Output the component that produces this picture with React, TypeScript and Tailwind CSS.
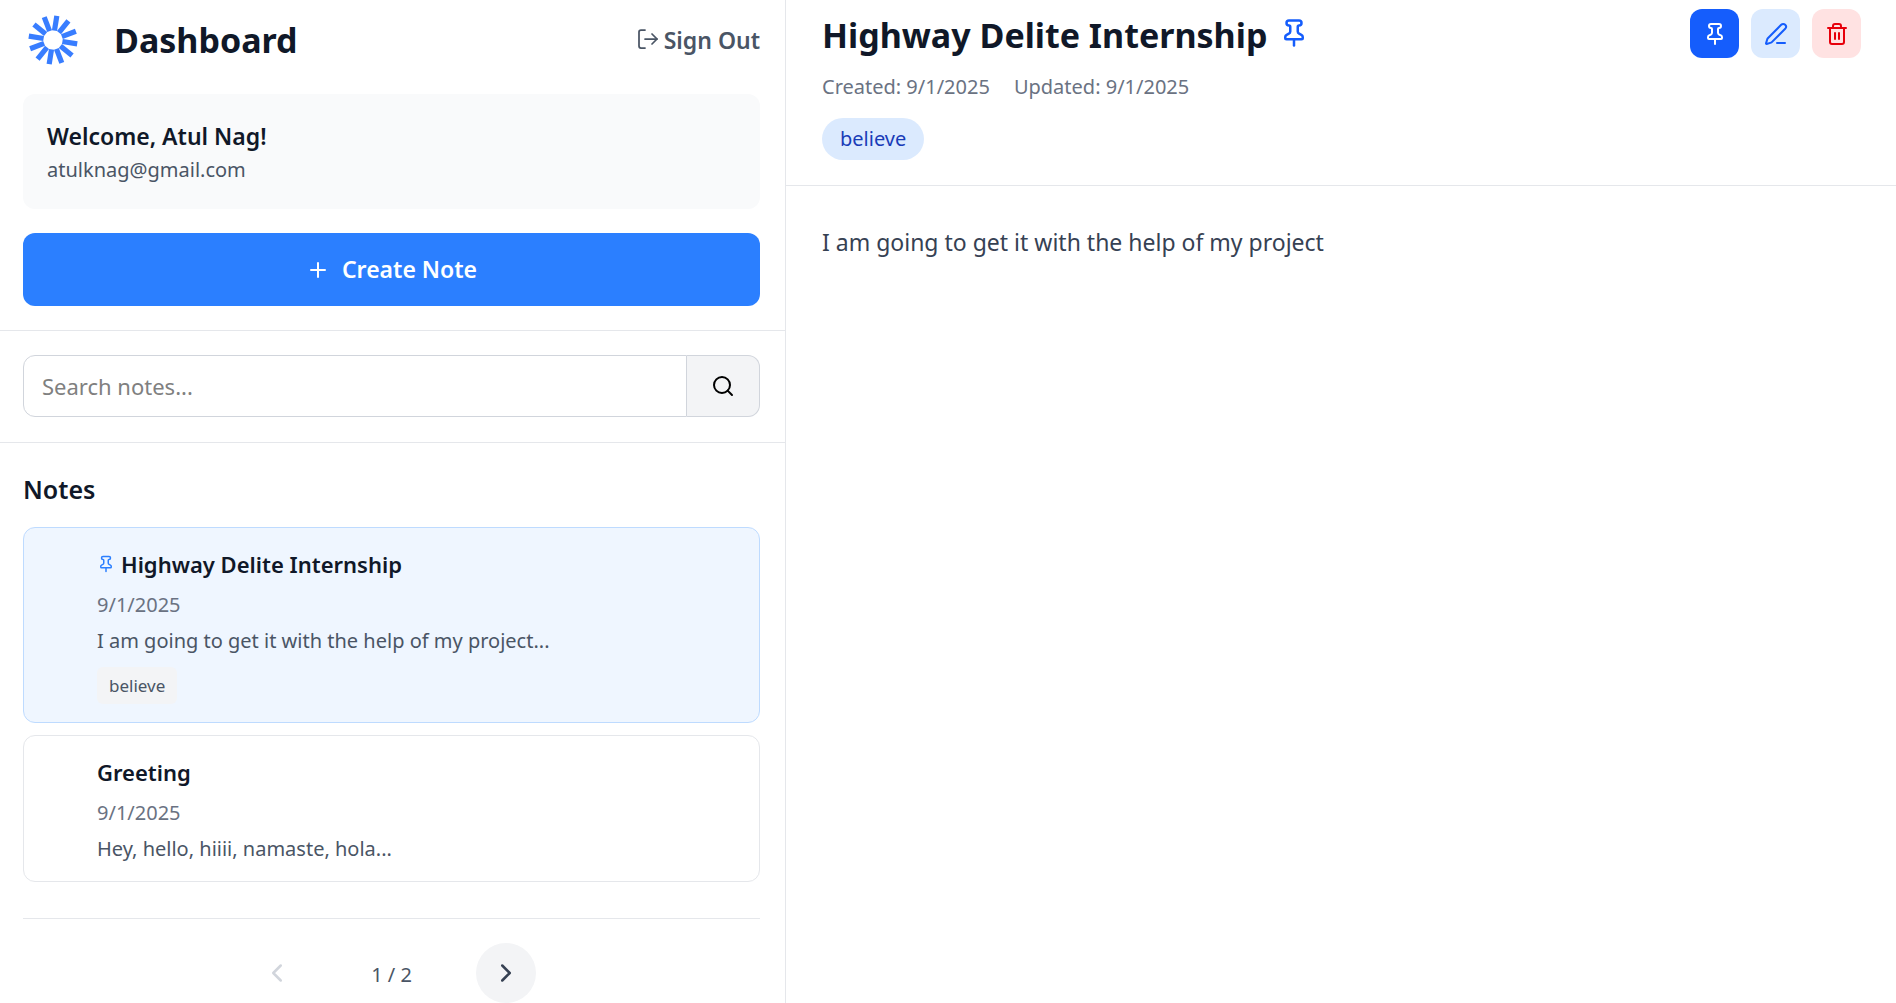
import { ChevronLeft, ChevronRight, LogOut, PenLine, Pin, Plus, Search, Trash2 } from "lucide-react";

type Note = {
  id: number;
  title: string;
  date: string;
  preview: string;
  pinned?: boolean;
  selected?: boolean;
  tags: string[];
};

const notes: Note[] = [
  {
    id: 1,
    title: "Highway Delite Internship",
    date: "9/1/2025",
    preview: "I am going to get it with the help of my project...",
    pinned: true,
    selected: true,
    tags: ["believe"],
  },
  {
    id: 2,
    title: "Greeting",
    date: "9/1/2025",
    preview: "Hey, hello, hiiii, namaste, hola...",
    tags: [],
  },
];

const rays = Array.from({ length: 12 }, (_, i) => i * 30 + 9);

function Logo() {
  return (
    <svg viewBox="0 0 50 50" className="size-[50px]" aria-hidden="true">
      {rays.map((angle) => (
        <rect key={angle} x="22.4" y="0.5" width="5.2" height="15" fill="#387dff" transform={`rotate(${angle} 25 25)`} />
      ))}
    </svg>
  );
}

function NoteCard({ note }: { note: Note }) {
  return (
    <li
      className={
        note.selected
          ? "rounded-xl border border-blue-200 bg-blue-50 py-[18px] pr-[18px] pl-[73px]"
          : "rounded-xl border border-gray-200 bg-white py-[18px] pr-[18px] pl-[73px]"
      }
    >
      <h3 className="flex items-center gap-1.5 text-[22px] leading-[37px] font-semibold text-gray-900">
        {note.pinned && <Pin className="mb-0.5 size-[18px] text-blue-500" />}
        {note.title}
      </h3>
      <p className="mt-2 text-[20px] leading-7 text-gray-500">{note.date}</p>
      <p className="mt-2 text-[20px] leading-7 text-gray-600">{note.preview}</p>
      {note.tags.length > 0 && (
        <div className="mt-3 flex">
          {note.tags.map((tag) => (
            <span key={tag} className="rounded-md bg-gray-100 px-3 text-[17px] leading-[37px] text-gray-600">
              {tag}
            </span>
          ))}
        </div>
      )}
    </li>
  );
}

function Sidebar() {
  return (
    <aside className="border-r border-gray-200">
      <div className="border-b border-gray-200 pr-[25px] pb-6 pl-[23px]">
        <header className="flex h-[94px] items-start justify-between">
          <div className="flex items-center gap-9 pt-3 pl-[5px]">
            <Logo />
            <h1 className="text-[34px] leading-[56px] font-bold text-gray-900">Dashboard</h1>
          </div>
          <button className="mt-[22px] flex items-center gap-1 text-[23px] leading-9 font-semibold text-gray-600">
            <LogOut className="mb-0.5 size-6" strokeWidth={1.75} />
            Sign Out
          </button>
        </header>
        <section className="rounded-xl bg-gray-50 p-6">
          <h2 className="text-[23px] leading-[37px] font-semibold text-gray-900">Welcome, Atul Nag!</h2>
          <p className="text-[20px] leading-[30px] text-gray-600">atulknag@gmail.com</p>
        </section>
        <button className="mt-6 flex w-full items-center justify-center gap-3 rounded-xl bg-blue-500 py-[18px] text-[23px] leading-[37px] font-semibold text-white">
          <Plus className="size-6" />
          Create Note
        </button>
      </div>

      <form className="flex border-b border-gray-200 pt-6 pr-[25px] pb-[25px] pl-[23px]" onSubmit={(e) => e.preventDefault()}>
        <input
          type="search"
          aria-label="Search notes"
          placeholder="Search notes..."
          className="h-[62px] min-w-0 flex-1 rounded-l-xl border border-gray-300 px-[18px] text-[22px] outline-none placeholder:text-[#808080]"
        />
        <button
          aria-label="Search"
          className="flex w-[73px] items-center justify-center rounded-r-xl border border-l-0 border-gray-300 bg-gray-100 text-black"
        >
          <Search className="size-6" />
        </button>
      </form>

      <div className="pt-6 pr-[25px] pl-[23px]">
        <h2 className="text-[25px] leading-[45px] font-semibold text-gray-900">Notes</h2>
        <ul className="mt-[15px] flex flex-col gap-3">
          {notes.map((note) => (
            <NoteCard key={note.id} note={note} />
          ))}
        </ul>
        <nav aria-label="Pages" className="mt-9 flex items-center justify-center border-t border-gray-200 pt-6">
          <button aria-label="Previous page" disabled className="rounded-full p-[15px] text-gray-300">
            <ChevronLeft className="size-[30px]" />
          </button>
          <span className="px-16 pt-1 text-[20px] text-gray-600">1 / 2</span>
          <button aria-label="Next page" className="rounded-full bg-gray-100 p-[15px] text-gray-700">
            <ChevronRight className="size-[30px]" />
          </button>
        </nav>
      </div>
    </aside>
  );
}

function NoteView() {
  return (
    <main>
      <header className="flex items-start justify-between border-b border-gray-200 pr-[35px] pb-[25px] pl-9">
        <div>
          <h2 className="flex items-center gap-3 pt-2 text-[34px] leading-[54px] font-bold text-gray-900">
            Highway Delite Internship
            <Pin className="mb-1 size-[30px] text-blue-600" />
          </h2>
          <p className="mt-2.5 flex gap-6 text-[20px] leading-[30px] text-gray-500">
            <span>Created: 9/1/2025</span>
            <span>Updated: 9/1/2025</span>
          </p>
          <div className="mt-4 flex">
            <span className="rounded-full bg-blue-100 px-[18px] text-[20px] leading-[42px] text-blue-800">believe</span>
          </div>
        </div>
        <div className="flex gap-3 pt-[9px]">
          <button aria-label="Unpin note" className="flex size-[49px] items-center justify-center rounded-xl bg-blue-600 text-white">
            <Pin className="size-6" />
          </button>
          <button aria-label="Edit note" className="flex size-[49px] items-center justify-center rounded-xl bg-blue-100 text-blue-600">
            <PenLine className="size-6" />
          </button>
          <button aria-label="Delete note" className="flex size-[49px] items-center justify-center rounded-xl bg-red-100 text-red-600">
            <Trash2 className="size-6" />
          </button>
        </div>
      </header>
      <p className="px-9 py-[35px] text-[23px] leading-[42px] text-gray-700">I am going to get it with the help of my project</p>
    </main>
  );
}

export default function App() {
  return (
    <div className="grid h-screen grid-cols-[786fr_1110fr] overflow-hidden bg-white font-['Noto_Sans',sans-serif]">
      <Sidebar />
      <NoteView />
    </div>
  );
}
